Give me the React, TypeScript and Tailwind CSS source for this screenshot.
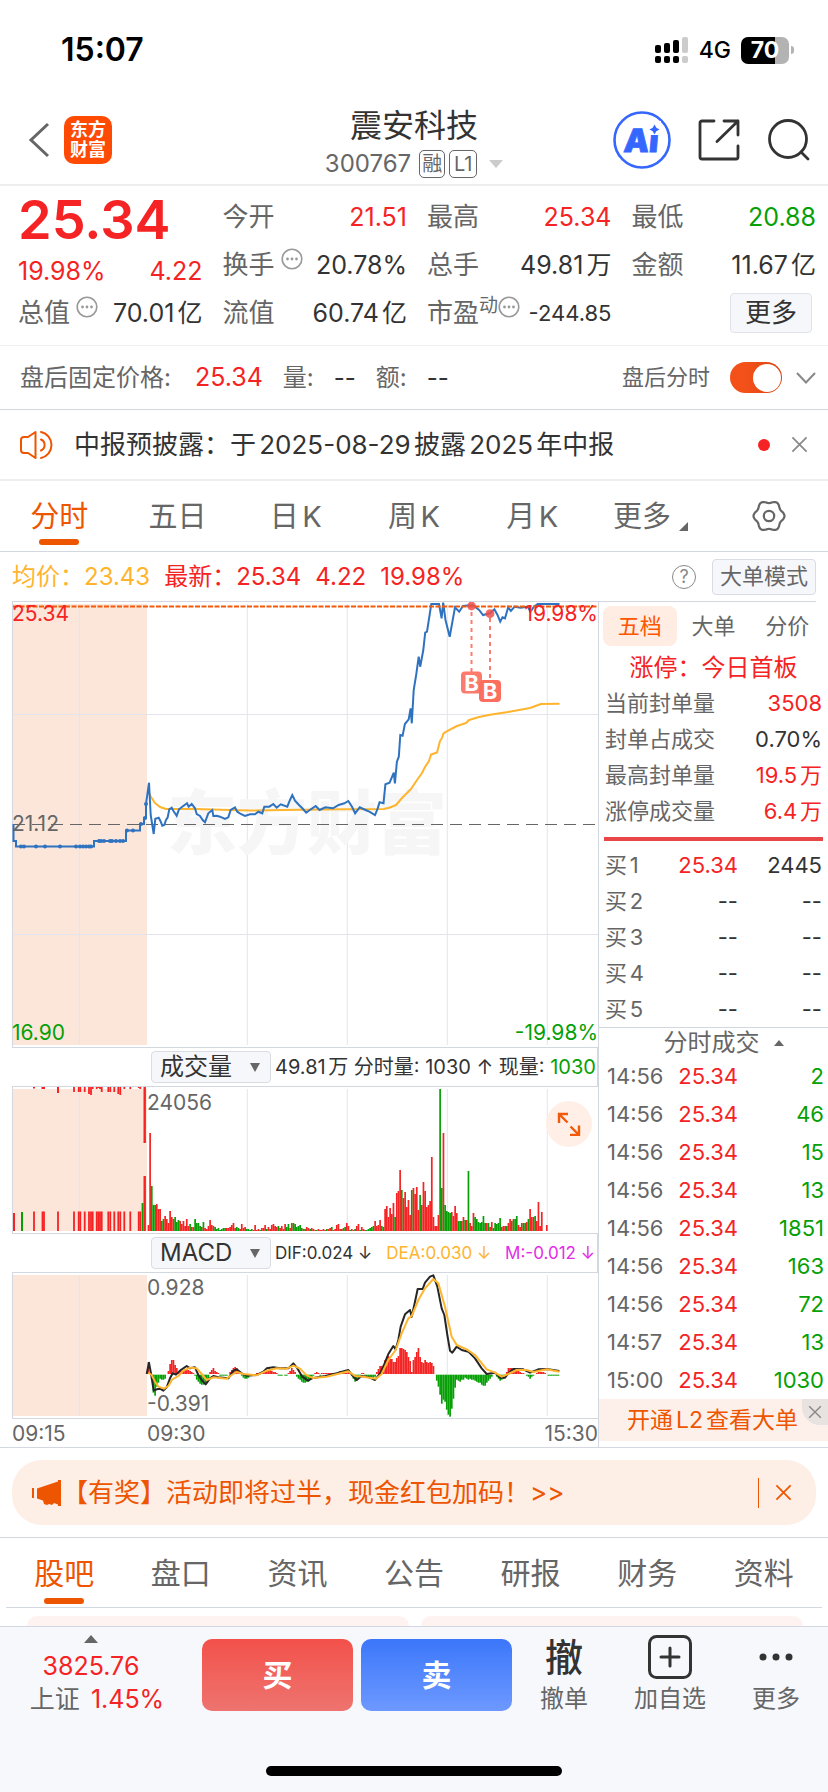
import React from "react";

const RED = "#f52323";
const GREEN = "#06a006";

/* ---------- data ---------- */

const buyLevels = [
  ["买1", "25.34", "2445"],
  ["买2", "--", "--"],
  ["买3", "--", "--"],
  ["买4", "--", "--"],
  ["买5", "--", "--"],
];

const trades = [
  ["14:56", "25.34", "2"],
  ["14:56", "25.34", "46"],
  ["14:56", "25.34", "15"],
  ["14:56", "25.34", "13"],
  ["14:56", "25.34", "1851"],
  ["14:56", "25.34", "163"],
  ["14:56", "25.34", "72"],
  ["14:57", "25.34", "13"],
  ["15:00", "25.34", "1030"],
];

const sealStats = [
  ["当前封单量", "3508", true],
  ["封单占成交", "0.70%", false],
  ["最高封单量", "19.5万", true],
  ["涨停成交量", "6.4万", true],
] as const;

// One value per minute from 09:30; positive is an up bar, negative a down bar.
const volume = [
  6, 98, -45, -26, -26, 27, 22, 22, -10, -12, 15, 12, 8, 20, 14, 12, -14, -9, -11, 10, 7, 10, 5, 12, 5, -7, 4, 4, -12, -8,
  -8, -5, 4, -9, 3, 2, 5, 11, 6, 5, -4, -2, -3, -1, -2, -3, -3, 3, 3, 4, 6, 8, 3, -4, -3, 2, 7, 3, 4, -2,
  -2, -1, -2, 1, 6, 1, 2, -1, 3, 3, 6, -2, 4, 2, 6, 7, 5, 4, -5, 3, 5, 2, 7, -4, -7, 3, 8, -8, -7, -4,
  -5, -6, -3, 2, -2, 4, 3, -2, 3, 2, 1, -1, 2, 1, 1, 2, 1, -2, 2, 3, -4, 1, 2, 6, 7, 2, -2, 3, -4, 8,
  5, -1, 2, 1, -2, 5, 7, -1, 4, 2, 1, -1, -2, -3, -4, -5, 10, 5, 6, 11, -5, -4, 22, 25, 14, 23, 17, 28, -14, 38,
  40, 61, -41, 33, 39, 24, 31, 16, -41, 43, 37, 44, 21, -36, 26, 49, 40, 24, 26, 30, 74, 14, 5, 5, 16, -142, -43, 98, -26, -20,
  -19, -18, 19, 15, 25, 18, -10, -10, 10, 14, -11, 11, -60, 8, 5, 18, -14, -12, -9, -8, -9, -15, -8, 8, -8, 4, 9, -3, -8, -7,
  -8, -13, 4, 5, 5, -5, 8, 12, -10, 12, -12, -15, 6, 4, 8, -8, -8, 9, -12, 22, 14, 14, -15, 10, 29, 5, 19, 0, 0, 6,
];

const macdBars = [
  12, 2, -5, -18, -21, -12, -8, -4, -5, -5, -4, 0, 3, 10, 14, 14, 9, 6, 2, 3, 3, 4, 5, 5, 4, 3, 2, 1, -1, -5,
  -7, -9, -10, -10, -9, -7, -4, 2, 4, 6, 3, 2, 1, -1, -1, -1, -1, -1, 0, 2, 4, 6, 7, 6, 3, 1, -1, -3, -4, -4,
  -3, -1, -1, 0, 0, 1, 1, 1, 1, 1, 2, 3, 3, 4, 3, 2, 2, 1, -1, -1, -1, 0, -1, -1, 1, 3, 6, 4, 2, -2,
  -4, -5, -7, -8, -8, -7, -7, -5, -3, -1, 1, 2, 1, -1, 1, 1, 1, 1, 1, 1, 1, 1, 1, 1, 2, 3, 2, 1, 1, 1,
  2, 1, -1, -4, -7, -6, -3, -1, 1, 1, -1, -2, -3, -3, -3, -3, -2, 2, 5, 8, 8, 9, 14, 17, 18, 15, 15, 12, 12, 16,
  18, 26, 26, 25, 24, 22, 17, 13, 2, 14, 17, 22, 26, 17, 12, 11, 14, 12, 11, 12, 11, 8, 0, -6, -12, -20, -29, -25, -27, -35,
  -40, -42, -34, -24, -13, -5, -6, -7, -5, -5, -3, -4, -5, -4, -5, -5, -6, -7, -8, -8, -10, -11, -11, -8, -6, -4, -2, 0, 0, -2,
  -4, -6, -5, -4, -1, 2, 6, 6, 6, 5, 4, 4, 3, 2, 1, 1, 0, -1, -2, -4, -2, -1, 0, 1, 2, 2, 2, 2, 1, 0,
  -1, -1, -1, -1, -1, -1, -1,
];

const auctionBars = [
  34, 42.5, 44, 58, 74, 78.7, 80.3, 84.7, 89, 91, 92.7, 96.7, 98.3, 100, 101.7, 108.3, 110.3, 114.3, 118.3, 120.3, 124.3, 130.3, 138.7, 140.3,
];

const priceLine =
  "13.5,824 13.5,841 16,841 16,846.5 94,846.5 94,841 126,841 126,830.5 140,830.5 140,824 144,824 144,818 146,818 146,804 149,782.7 150.7,815 153.7,834 155.3,818.7 158.7,817.7 160.3,820.7 162.3,825.7 164.3,825 166,820 167.7,817.3 169.3,809.3 171.7,807.7 173.3,810.7 176.7,815.7 179,809.3 182.3,806.7 187,803.3 188.7,806.7 191.7,804 195,808.3 196.7,814 200,816 202.7,820 205,822.3 208.3,813.3 212.3,810 213.3,816 216.7,815.7 220,816.7 225,819 228.3,817.3 230.7,810 235,807.3 237.3,811.7 240.7,814 245,816 250,814.3 255,814.3 258.3,811.7 262.3,813.3 264.3,806.7 269.3,806.7 273.3,804 276.7,807.7 280.7,804.3 287.3,806.7 290,800 292.3,795 295,800.7 299,805 302.3,808.3 306.2,812.7 310.8,809.3 315.7,806 319.6,810 325.3,807.3 333,808.3 338.7,805 344.4,803.3 348.3,801 352,806.7 355.1,813.3 359.7,807.3 365.5,810 369.3,811.7 375,815 377.7,808.3 379.6,802.3 383.5,803.3 385.4,784.3 389.6,782.7 393.8,772.7 394.9,783.3 396.9,761.7 398.8,756.7 400.3,735 402.6,735.7 404.9,724 408.7,719.3 410.6,708.3 411.8,723.3 413.7,690 416.4,673.3 418.7,656.7 420.2,666.7 423.3,650 425.2,632.7 427,631.7 431.3,604 439,604 441.6,618.3 443.2,602.7 445.5,620 449.7,636.7 455,607.3 459.2,611.7 463,606 472.6,605 479.1,610 483,615 489.9,613.3 494.4,609.3 497.5,615 500.2,621.7 502.5,617.3 505,618.3 508.2,607.3 510.9,611 514.7,606.7 520.5,607.7 528,606.7 530.4,611.7 533.9,606.7 537.7,604 559.5,604";

const averageLine =
  "149,793 151,797 155,803 160,807 166,809 195,809 230,810 250,810.5 300,809.7 345,809.3 384,809 390,807.5 396,805 402,798 411,789 417,780 422,773 425,767 429,761 431,754.5 437,752.5 440,741 442,738 443.5,733.3 448,730.7 457,726 466,723 469,720 479,717 490,714.7 508,712 530,708 541,704 559.5,703.7";

const difLine =
  "440,882 447,848 453,880 461,932 470,928 480,926 490,932 500,922 510,895 518,880 528,884 540,872 560,858 570,865 585,862 595,885 605,900 617,913 630,895 640,888 655,892 685,895 700,872 710,868 725,880 740,887 770,885 790,875 800,865 820,862 840,865 865,865 880,850 890,862 907,890 924,902 936,895 976,888 1010,880 1045,870 1056,885 1070,900 1085,888 1108,892 1125,900 1140,880 1150,860 1165,822 1180,798 1187,808 1195,780 1202,740 1215,703 1230,690 1235,710 1245,665 1253,627 1268,627 1275,608 1290,590 1300,586 1312,620 1325,685 1333,705 1342,765 1350,812 1357,818 1370,800 1385,810 1405,815 1425,835 1445,865 1460,882 1485,878 1500,893 1515,893 1525,880 1540,867 1570,868 1590,878 1615,868 1640,867 1678,873";

const deaLine =
  "445,878 455,885 465,905 475,920 492,926 505,918 517,898 535,888 550,872 570,863 590,865 605,882 620,900 640,892 680,896 695,885 710,876 730,882 770,886 800,872 830,865 860,866 880,857 900,866 920,886 940,894 980,890 1045,874 1065,888 1090,890 1128,896 1145,882 1165,840 1187,810 1205,760 1225,715 1235,708 1255,660 1275,625 1300,597 1315,610 1335,680 1355,770 1370,795 1400,808 1425,825 1460,868 1485,878 1505,890 1525,882 1550,870 1580,870 1600,876 1640,868 1678,875";

const auctionDots = [21, 24, 36, 45, 60, 76, 80, 83, 86, 89, 91];
const auctionDots2 = [99, 101, 104, 110, 112, 116, 120, 123];

/* ---------- icons ---------- */

function InfoDots() {
  return (
    <svg viewBox="0 0 22 22" className="mb-3 size-[22px] shrink-0" fill="none" stroke="#999" aria-hidden="true">
      <circle cx="11" cy="11" r="9.8" strokeWidth="1.6" />
      <g fill="#999" stroke="none">
        <circle cx="6.5" cy="11" r="1.4" />
        <circle cx="11" cy="11" r="1.4" />
        <circle cx="15.5" cy="11" r="1.4" />
      </g>
    </svg>
  );
}

function Cross({ className }: { className: string }) {
  return (
    <svg viewBox="0 0 18 18" className={className} fill="none" stroke="currentColor" strokeWidth="1.8" aria-hidden="true">
      <path d="M1.5 1.5l15 15M16.5 1.5l-15 15" />
    </svg>
  );
}

function Gear() {
  const pts = Array.from({ length: 73 }, (_, i) => {
    const a = (i * Math.PI) / 36;
    const r = 14.2 + 1.3 * Math.cos(6 * a);
    return `${(17 + r * Math.cos(a)).toFixed(2)},${(17 + r * Math.sin(a)).toFixed(2)}`;
  }).join(" ");
  return (
    <svg viewBox="0 0 34 34" className="size-[34px]" fill="none" stroke="#666" strokeWidth="2.2" aria-hidden="true">
      <polygon points={pts} strokeLinejoin="round" />
      <circle cx="17" cy="17" r="5.2" />
    </svg>
  );
}

/* ---------- charts ---------- */

const gridX = [79.3, 247.3, 347.3, 447.3, 547.3];

function Frame({ top, bottom }: { top: number; bottom: number }) {
  return (
    <>
      <rect x="13" y={top + 2} width="134" height={bottom - top - 4} fill="#fce6da" />
      {gridX.map((x) => (
        <line key={x} x1={x} x2={x} y1={top + 2} y2={bottom - 2} stroke="#e3e5ee" />
      ))}
      <line x1="12.5" x2="12.5" y1={top} y2={bottom} stroke="#d3d7df" />
    </>
  );
}

function PriceChart() {
  return (
    <div className="relative h-[446px] border-t border-[#d3d7df]">
      <svg viewBox="12 602 586 445" preserveAspectRatio="none" className="block h-full w-full" aria-label="分时走势">
        <Frame top={602} bottom={1047} />
        <path d="M13 714.5H598M13 934.5H598" stroke="#e3e5ee" />
        <text x="167" y="849" fontSize="70" fontWeight="900" fill="#f6f6f7" className="font-['Noto_Sans_CJK_SC',sans-serif]">
          东方财富
        </text>
        <path d="M13 824.5H598" stroke="#666" strokeDasharray="12 7" />
        <polyline points={averageLine} fill="none" stroke="#ffb42e" strokeWidth="2" strokeLinejoin="round" />
        <polyline points={priceLine} fill="none" stroke="#2f73c0" strokeWidth="2" strokeLinejoin="miter" />
        <g fill="#2f73c0">
          {auctionDots.map((x) => (
            <circle key={x} cx={x} cy="846.5" r="2" />
          ))}
          {auctionDots2.map((x) => (
            <circle key={x} cx={x} cy="841" r="2" />
          ))}
          <circle cx="127" cy="830.5" r="2" />
          <circle cx="133" cy="830.5" r="2" />
          <circle cx="141" cy="824" r="2" />
          <circle cx="145" cy="818" r="2" />
          <circle cx="146" cy="804" r="2" />
        </g>
        <path d="M13 606.5H598" stroke="#f05a0a" strokeWidth="2" strokeDasharray="5 1.5" />
        <g stroke="#fc7b6c" strokeWidth="2" strokeDasharray="4 4">
          <path d="M471.5 612V672M490 618V680" />
        </g>
        <g fill="#f0504a" fillOpacity="0.85">
          <circle cx="471.5" cy="606" r="4.4" />
          <circle cx="490" cy="613.7" r="4.4" />
        </g>
        <g fontSize="22" fontWeight="700" textAnchor="middle" fill="#fff" className="font-[Inter,sans-serif]">
          <rect x="461" y="671.5" width="21" height="22" rx="4" fill="#fc7b6c" />
          <text x="471.5" y="690.5">B</text>
          <rect x="479" y="680" width="22" height="22" rx="4" fill="#fc6f5f" />
          <text x="490" y="699">B</text>
        </g>
      </svg>
      <span className="absolute top-0 left-0 text-[21px] leading-6 text-[#f52323]">25.34</span>
      <span className="absolute top-0 right-0 text-[21px] leading-6 text-[#f52323]">19.98%</span>
      <span className="absolute top-[210px] left-0 text-[21px] leading-6 text-[#666]">21.12</span>
      <span className="absolute bottom-[2px] left-0 text-[21px] leading-6 text-[#06a006]">16.90</span>
      <span className="absolute right-0 bottom-[2px] text-[21px] leading-6 text-[#06a006]">-19.98%</span>
    </div>
  );
}

function Bars({ values, base }: { values: number[]; base: number }) {
  return (
    <>
      {values.map((v, i) => (
        <rect key={i} x={147.6 + i * 1.6667} y={base - Math.abs(v)} width="1.7" height={Math.abs(v)} fill={v > 0 ? RED : GREEN} />
      ))}
    </>
  );
}

function VolumeChart() {
  return (
    <div className="relative h-[146px]">
      <svg viewBox="12 1087 586 146" preserveAspectRatio="none" className="block h-full w-full" aria-label="成交量">
        <Frame top={1087} bottom={1233} />
        <g fill={RED}>
          <rect x="13" y="1213" width="2" height="18" />
          {auctionBars.map((x) => (
            <rect key={x} x={x - 0.9} y="1211.5" width="1.8" height="19.5" />
          ))}
          <rect x="143.5" y="1176" width="2.4" height="55" />
          <rect x="143.5" y="1087" width="2.4" height="56" />
          <rect x="33" y="1087" width="2" height="1.5" />
          <rect x="41.5" y="1087" width="3.5" height="2" />
          <rect x="57" y="1087" width="2" height="6" />
          {auctionBars.slice(4).map((x, i) => (
            <rect key={x} x={x - 0.9} y="1087" width="1.8" height={[5, 5, 5, 5, 7, 8, 2, 2, 1, 2][i % 10]} />
          ))}
        </g>
        <rect x="21" y="1212" width="2" height="19" fill={GREEN} />
        <rect x="141.6" y="1203" width="1.9" height="28" fill={GREEN} />
        <Bars values={volume} base={1231} />
      </svg>
      <span className="absolute top-1 left-[135px] text-[21px] leading-6 text-[#666]">24056</span>
      <button aria-label="全屏" className="absolute top-[14px] right-[6px] flex size-[46px] items-center justify-center rounded-full bg-[#ffede4]/90">
        <svg viewBox="0 0 24 24" className="size-6" fill="none" stroke="#f05a0a" strokeWidth="2.4" aria-hidden="true">
          <path d="M2 11V2h9M2.5 2.5l8 8M22 13.5V23h-9M21.5 22.5l-8-8" />
        </svg>
      </button>
    </div>
  );
}

function MacdChart() {
  return (
    <div className="relative h-[145px]">
      <svg viewBox="36 579 1758 435" preserveAspectRatio="none" className="block h-full w-full" aria-label="MACD">
        <g transform="translate(0 -3240) scale(3)">
          <Frame top={1273} bottom={1418} />
          {macdBars.map((v, i) => (
            <rect
              key={i}
              x={147.6 + i * 1.6667}
              y={v > 0 ? 1374 - v : 1374.7}
              width="1.7"
              height={Math.abs(v)}
              fill={v > 0 ? RED : GREEN}
            />
          ))}
        </g>
        <g fill="none" strokeWidth="6" strokeLinejoin="round">
          <polyline points={difLine} stroke="#262626" />
          <polyline points={deaLine} stroke="#ffb42e" />
        </g>
      </svg>
      <span className="absolute top-[3px] left-[135px] text-[21px] leading-6 text-[#666]">0.928</span>
      <span className="absolute bottom-[2px] left-[135px] text-[21px] leading-6 text-[#666]">-0.391</span>
    </div>
  );
}

function IndicatorPicker({ label }: { label: string }) {
  return (
    <button className="ml-[139px] flex h-8 w-[120px] shrink-0 items-center justify-between rounded-[4px] border border-[#d9dce3] bg-[#f6f7fa] pr-2.5 pl-2 text-2xl leading-none text-[#333]">
      {label}
      <svg viewBox="0 0 10 9" className="h-[9px] w-2.5 fill-[#666]" aria-hidden="true">
        <path d="M0 0h10L5 9z" />
      </svg>
    </button>
  );
}

/* ---------- quote header ---------- */

function Quote({ label, value, tone = "text-[#333]", info, sup }: { label: string; value: string; tone?: string; info?: boolean; sup?: string }) {
  return (
    <div className="flex h-12 items-center">
      <span className="text-[26px] text-[#666]">{label}</span>
      {sup && <span className="mb-4 text-[19px] text-[#666]">{sup}</span>}
      {info && (
        <span className={sup ? "flex" : "ml-1.5 flex"}>
          <InfoDots />
        </span>
      )}
      <span className={`ml-auto ${sup ? "text-[22px]" : "text-[25px]"} ${tone}`}>{value}</span>
    </div>
  );
}

export default function App() {
  const periods = ["分时", "五日", "日K", "周K", "月K"];
  const sections = ["股吧", "盘口", "资讯", "公告", "研报", "财务", "资料"];
  return (
    <div className="w-full bg-white font-[Inter,'Noto_Sans_CJK_SC',sans-serif] leading-none whitespace-nowrap text-[#333] [text-autospace:normal]">
      {/* status bar */}
      <div className="flex h-24 items-center justify-between pt-1 pr-[34px] pl-[61px] text-black">
        <span className="text-[32px] font-semibold">15:07</span>
        <div className="flex items-center">
          <svg viewBox="0 0 34 27" className="h-[27px] w-[34px]" aria-hidden="true">
            <rect x="0" y="8" width="6" height="8" rx="2" />
            <rect x="9" y="6" width="6" height="10" rx="2" />
            <rect x="18" y="3" width="6" height="13" rx="2" />
            <rect x="27" y="0" width="6" height="16" rx="2" fill="#ccc" />
            <rect x="0" y="19" width="6" height="7" rx="2" />
            <rect x="9" y="19" width="6" height="7" rx="2" />
            <rect x="18" y="19" width="6" height="7" rx="2" />
            <rect x="27" y="19" width="6" height="7" rx="2" fill="#ccc" />
          </svg>
          <span className="ml-2.5 text-[23px] font-medium">4G</span>
          <div className="ml-2.5 flex h-[27px] w-12 items-center justify-center rounded-[7px] bg-linear-to-r from-black from-70% to-[#b3b3b3] to-70% text-[23px] font-bold text-white">
            70
          </div>
          <span className="ml-0.5 h-2 w-[3px] rounded-r-full bg-[#b3b3b3]" />
        </div>
      </div>

      {/* title bar */}
      <header className="flex h-[90px] items-center justify-between border-b-2 border-[#eee] pr-[18px] pl-7">
        <div className="flex w-[200px] items-center">
          <button aria-label="返回">
            <svg viewBox="0 0 22 36" className="h-9 w-[22px]" fill="none" stroke="#666" strokeWidth="3" aria-hidden="true">
              <path d="M20 2L3 18l17 16" />
            </svg>
          </button>
          <div className="ml-3.5 flex size-12 flex-col items-center justify-center rounded-[10px] bg-[#fe4a02] text-[18px] leading-5 font-bold text-white">
            <span>东方</span>
            <span>财富</span>
          </div>
        </div>
        <div className="flex flex-col items-center gap-1 pt-1">
          <h1 className="text-[32px] leading-10">震安科技</h1>
          <button className="flex items-center text-[24px] text-[#666]">
            300767
            <span className="ml-2 flex h-7 w-[26px] items-center justify-center rounded-[5px] border border-[#666] text-[20px]">融</span>
            <span className="ml-1 flex h-7 w-7 items-center justify-center rounded-[5px] border border-[#666] text-[20px]">L1</span>
            <svg viewBox="0 0 14 8" className="ml-3 h-2 w-3.5 fill-[#ccc]" aria-hidden="true">
              <path d="M0 0h14L7 8z" />
            </svg>
          </button>
        </div>
        <div className="flex w-[210px] items-center justify-end">
          <button aria-label="Ai">
            <svg viewBox="0 0 58 58" className="size-[58px]" aria-hidden="true">
              <circle cx="29" cy="29" r="27.5" fill="none" stroke="#3567fe" strokeWidth="2.6" />
              <g fill="#3567fe">
                <text x="10.5" y="41" fontSize="32" fontWeight="900" stroke="#3567fe" strokeWidth="0.8" transform="skewX(-5) translate(3 0)" className="font-[Inter,sans-serif]">
                  Ai
                </text>
                <rect x="34" y="10" width="14" height="14" fill="#fff" />
                <path d="M41.5 13.500l1.800 3.200 3.200 1.800-3.200 1.800-1.800 3.200-1.800-3.200-3.200-1.800 3.200-1.800z" />
              </g>
            </svg>
          </button>
          <button aria-label="分享" className="ml-[27px]">
            <svg viewBox="0 0 42 42" className="size-[42px]" fill="none" stroke="#333" strokeWidth="2.8" strokeLinecap="round" strokeLinejoin="round" aria-hidden="true">
              <path d="M16 2H4a2 2 0 0 0-2 2v34a2 2 0 0 0 2 2h34a2 2 0 0 0 2-2V27M26 2h14v14M40 2L19 22.5" />
            </svg>
          </button>
          <button aria-label="搜索" className="ml-7">
            <svg viewBox="0 0 42 42" className="size-[42px]" fill="none" stroke="#333" strokeWidth="2.8" strokeLinecap="round" aria-hidden="true">
              <circle cx="20" cy="20" r="18.5" />
              <path d="M33 33l7 7" />
            </svg>
          </button>
        </div>
      </header>

      {/* quote figures */}
      <section className="grid grid-cols-4 gap-x-5 border-b border-[#eee] pt-[7px] pr-3 pb-2 pl-[18px]">
        <div>
          <div className="flex h-[54px] items-center text-[54px] font-semibold text-[#f52323]">25.34</div>
          <div className="flex h-[42px] items-center justify-between pt-1.5 text-[25px] text-[#f52323]">
            <span>19.98%</span>
            <span>4.22</span>
          </div>
          <Quote label="总值" value="70.01亿" info />
        </div>
        <div>
          <Quote label="今开" value="21.51" tone="text-[#f52323]" />
          <Quote label="换手" value="20.78%" info />
          <Quote label="流值" value="60.74亿" />
        </div>
        <div>
          <Quote label="最高" value="25.34" tone="text-[#f52323]" />
          <Quote label="总手" value="49.81万" />
          <Quote label="市盈" sup="动" value="-244.85" info />
        </div>
        <div>
          <Quote label="最低" value="20.88" tone="text-[#06a006]" />
          <Quote label="金额" value="11.67亿" />
          <div className="flex h-12 items-center justify-end pr-1">
            <button className="h-10 w-[82px] rounded-[4px] border border-[#dfe2e8] bg-[#f6f7fa] text-[26px]">更多</button>
          </div>
        </div>
      </section>

      {/* after-hours fixed price */}
      <section className="flex h-16 items-center border-b border-[#d3d7df] pr-3 pl-5 text-2xl text-[#666]">
        <span>盘后固定价格:</span>
        <span className="ml-6 text-[25px] text-[#f52323]">25.34</span>
        <span className="ml-5">量:</span>
        <span className="ml-5 text-[#333]">--</span>
        <span className="ml-5">额:</span>
        <span className="ml-5 text-[#333]">--</span>
        <label className="ml-auto flex items-center text-[22px]">
          盘后分时
          <input type="checkbox" defaultChecked className="peer sr-only" />
          <span className="ml-5 flex h-[31px] w-[52px] items-center justify-end rounded-full bg-[#f4511a] bg-linear-to-r from-[#f4511a] from-30% to-[#d9430f] p-0.5 pr-px">
            <span className="size-[28px] rounded-full bg-white" />
          </span>
        </label>
        <svg viewBox="0 0 20 12" className="ml-3.5 h-3 w-5" fill="none" stroke="#888" strokeWidth="2" aria-hidden="true">
          <path d="M1 1l9 9.5L19 1" />
        </svg>
      </section>

      {/* notice */}
      <section className="flex h-[71px] items-center border-b-2 border-[#eee] pr-5 pl-5">
        <svg viewBox="0 0 34 30" className="h-[30px] w-[34px]" fill="none" stroke="#ee5500" strokeWidth="2" strokeLinecap="round" strokeLinejoin="round" aria-hidden="true">
          <path d="M15.5 2v26L8 23H4a3 3 0 0 1-3-3V10a3 3 0 0 1 3-3h4zM21 2a13.300 13.300 0 0 1 0 26M21 9.500a6 6 0 0 1 0 11" />
        </svg>
        <span className="ml-5 text-[26px]">中报预披露：于2025-08-29披露2025年中报</span>
        <span className="ml-auto size-3 rounded-full bg-[#f52323]" />
        <button aria-label="关闭公告" className="ml-[21px] text-[#888]">
          <Cross className="size-[17px]" />
        </button>
      </section>

      {/* period tabs */}
      <nav className="flex h-[71px] border-b border-[#d3d7df] text-[29px] text-[#666]">
        {periods.map((p, i) => (
          <button key={p} className={`relative flex flex-1 items-center justify-center ${i === 0 ? "text-[#ee5500]" : ""}`}>
            {p}
            {i === 0 && <span className="absolute bottom-1.5 h-1.5 w-10 rounded-full bg-[#ee5500]" />}
          </button>
        ))}
        <button className="flex flex-1 items-center justify-center">
          更多
          <svg viewBox="0 0 9 9" className="mt-5 ml-2 size-[9px] fill-[#666]" aria-hidden="true">
            <path d="M9 0v9H0z" />
          </svg>
        </button>
        <button aria-label="设置" className="flex flex-1 items-center justify-center">
          <Gear />
        </button>
      </nav>

      {/* legend */}
      <div className="flex h-[49px] items-center pr-3 pl-3 text-2xl">
        <span className="text-[#ffb42e]">均价：23.43</span>
        <span className="ml-3.5 text-[#f52323]">最新：25.34</span>
        <span className="ml-3.5 text-[#f52323]">4.22</span>
        <span className="ml-3.5 text-[#f52323]">19.98%</span>
        <button aria-label="帮助" className="ml-auto flex size-6 items-center justify-center rounded-full border border-[#888] text-[18px] text-[#888]">
          ?
        </button>
        <button className="ml-4 h-9 w-[104px] rounded-[4px] border border-[#d9dce3] bg-[#f6f7fa] text-[22px] text-[#666]">大单模式</button>
      </div>

      {/* charts and order book */}
      <main className="flex border-b border-[#d3d7df]">
        <div className="min-w-0 flex-1 border-r border-[#d3d7df] pl-3">
          <PriceChart />
          <div className="flex h-10 items-center border-y border-r border-[#d3d7df] text-[20px]">
            <IndicatorPicker label="成交量" />
            <span className="ml-1">
              49.81万 分时量: 1030 ↑ 现量: <span className="text-[#06a006]">1030</span>
            </span>
          </div>
          <VolumeChart />
          <div className="flex h-10 items-center border-y border-r border-[#d3d7df] text-[17px]">
            <IndicatorPicker label="MACD" />
            <span className="ml-1">DIF:0.024 ↓</span>
            <span className="ml-3.5 text-[#ffb42e]">DEA:0.030 ↓</span>
            <span className="ml-3.5 text-[#e52be5]">M:-0.012 ↓</span>
          </div>
          <MacdChart />
          <div className="flex h-[29px] items-center border-t border-[#d3d7df] text-[21px] text-[#666]">
            <span className="w-[135px]">09:15</span>
            <span>09:30</span>
            <span className="ml-auto">15:30</span>
          </div>
        </div>

        <aside className="flex w-[229px] shrink-0 flex-col text-[22px] text-[#666]">
          <div className="mr-3 border-t border-[#d3d7df]" />
          <div className="mt-1 flex h-10 pr-1 pl-1">
            <button className="flex-1 rounded-lg bg-[#ffece3] text-[#ff5500]">五档</button>
            <button className="flex-1">大单</button>
            <button className="flex-1">分价</button>
          </div>
          <div className="mt-[5px] flex h-[34px] items-center justify-center text-2xl text-[#f52323]">涨停：今日首板</div>
          <dl className="pr-1.5 pl-1.5">
            {sealStats.map(([k, v, up]) => (
              <div key={k} className="flex h-9 items-center justify-between">
                <dt>{k}</dt>
                <dd className={up ? "text-[#f52323]" : "text-[#333]"}>{v}</dd>
              </div>
            ))}
          </dl>
          <div className="mx-[5px] mt-2 mb-1.5 h-1 bg-[#e94747]" />
          <table className="mx-1.5">
            <tbody>
              {buyLevels.map(([n, p, q]) => (
                <tr key={n} className="h-9">
                  <td className="text-left">{n}</td>
                  <td className={p === "--" ? "text-right text-[#333]" : "text-right text-[#f52323]"}>{p}</td>
                  <td className="w-[84px] text-right text-[#333]">{q}</td>
                </tr>
              ))}
            </tbody>
          </table>
          <button className="flex h-[30px] items-center justify-center border-t border-[#d3d7df] pl-5 text-2xl">
            分时成交
            <svg viewBox="0 0 10 6" className="ml-3.5 h-1.5 w-2.5 fill-[#666]" aria-hidden="true">
              <path d="M0 6h10L5 0z" />
            </svg>
          </button>
          <table className="mr-1 ml-2">
            <tbody>
              {trades.map(([t, p, q], i) => (
                <tr key={i} className="h-[38px]">
                  <td className="text-left">{t}</td>
                  <td className="text-right text-[#f52323]">{p}</td>
                  <td className="w-[86px] text-right text-[#06a006]">{q}</td>
                </tr>
              ))}
            </tbody>
          </table>
          <div className="relative flex h-[42px] items-center justify-center bg-[#fdf0eb]">
            <a href="#l2" className="mr-0.5 text-[23px] text-[#ee5500]">
              开通L2查看大单
            </a>
            <button aria-label="关闭" className="absolute top-0 right-0 flex size-[26px] items-center justify-center rounded-bl-[18px] bg-[#e8e2e0] text-[#888]">
              <Cross className="size-3.5" />
            </button>
          </div>
        </aside>
      </main>

      {/* promotion banner */}
      <div className="border-b border-[#d3d7df] px-3 py-3">
        <div className="flex h-[65px] items-center rounded-[30px] bg-[#fdeee6] pr-6 pl-5 text-[26px] text-[#ee5500]">
          <svg viewBox="0 0 30 26" className="h-[26px] w-[30px] fill-current" aria-hidden="true">
            <path d="M0 8h2v10H0zM5 8.500L26 1.500V0h3v26h-3v-1.500l-4-1.500-2 2-3-1-2 1-3-1-1-3.500-6-2z" />
          </svg>
          <a href="#event">【有奖】活动即将过半，现金红包加码！&gt;&gt;</a>
          <span className="ml-auto h-[30px] w-px bg-[#ee5500]" />
          <button aria-label="关闭活动" className="ml-4">
            <Cross className="size-[17px]" />
          </button>
        </div>
      </div>

      {/* section tabs */}
      <nav className="mx-1.5 flex h-[70px] border-b border-[#d3d7df] text-[30px] text-[#666]">
        {sections.map((s, i) => (
          <button key={s} className={`relative flex flex-1 items-center justify-center ${i === 0 ? "text-[#ee5500]" : ""}`}>
            {s}
            {i === 0 && <span className="absolute bottom-[3px] h-1.5 w-10 rounded-full bg-[#ee5500]" />}
          </button>
        ))}
      </nav>
      <div className="flex h-[18px] gap-3 pt-2 pr-[25px] pl-[27px]">
        <div className="flex-1 rounded-t-[14px] bg-[#fff3f1]" />
        <div className="flex-1 rounded-t-[14px] bg-[#fff3f1]" />
      </div>

      {/* trade bar */}
      <footer className="border-t border-[#d3d7df] bg-[#f7f8fb] pt-2">
        <div className="flex items-start">
          <button className="flex w-[190px] flex-col items-center pr-2 text-[25px]">
            <svg viewBox="0 0 14 8" className="h-2 w-3.5 fill-[#666]" aria-hidden="true">
              <path d="M0 8h14L7 0z" />
            </svg>
            <span className="mt-2 leading-[30px] text-[#f52323]">3825.76</span>
            <span className="pl-3 leading-9 text-[#666]">
              上证 <span className="ml-1 text-[#f52323]">1.45%</span>
            </span>
          </button>
          <div className="ml-3 flex flex-1 gap-2 pt-1">
            <button className="h-[72px] flex-1 rounded-[10px] bg-linear-to-b from-[#f3504a] to-[#ee736f] text-[30px] font-bold text-white">买</button>
            <button className="h-[72px] flex-1 rounded-[10px] bg-linear-to-b from-[#3b77fa] to-[#6d98ff] text-[30px] font-bold text-white">卖</button>
          </div>
          <button className="flex w-[104px] flex-col items-center text-2xl text-[#666]">
            <span className="h-11 text-[38px] leading-11 font-medium text-[#333]" aria-hidden="true">
              撤
            </span>
            <span className="mt-1 leading-8">撤单</span>
          </button>
          <button className="flex w-[108px] flex-col items-center text-2xl text-[#666]">
            <svg viewBox="0 0 44 44" className="size-11" fill="none" stroke="#333" strokeWidth="3" strokeLinecap="round" aria-hidden="true">
              <rect x="1.5" y="1.5" width="41" height="41" rx="7" />
              <path d="M22 13v18M13 22h18" />
            </svg>
            <span className="mt-1 leading-8">加自选</span>
          </button>
          <button className="flex w-[104px] flex-col items-center text-2xl text-[#666]">
            <svg viewBox="0 0 34 44" className="h-11 w-[34px] fill-[#333]" aria-hidden="true">
              <circle cx="4" cy="22" r="3.5" />
              <circle cx="17" cy="22" r="3.5" />
              <circle cx="30" cy="22" r="3.5" />
            </svg>
            <span className="mt-1 leading-8">更多</span>
          </button>
        </div>
        <div className="flex justify-center pt-[49px] pb-4">
          <span className="h-2.5 w-[296px] rounded-full bg-black" />
        </div>
      </footer>
    </div>
  );
}
